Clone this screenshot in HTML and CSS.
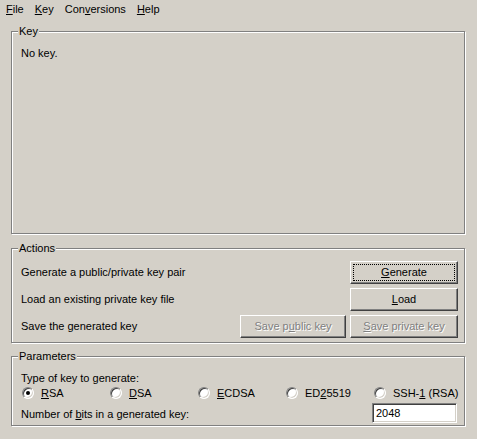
FILE: index.html
```
<!DOCTYPE html>
<html>
<head>
<meta charset="utf-8">
<title>PuTTY Key Generator</title>
<link rel="stylesheet" href="styles.css">
</head>
<body>
<div class="menubar">
  <span class="menu-item"><u>F</u>ile</span>
  <span class="menu-item"><u>K</u>ey</span>
  <span class="menu-item">Con<u>v</u>ersions</span>
  <span class="menu-item"><u>H</u>elp</span>
</div>

<fieldset class="group group-key">
  <legend>Key</legend>
  <div class="key-body">No key.</div>
</fieldset>

<fieldset class="group group-actions">
  <legend>Actions</legend>
  <div class="action-row">
    <span class="action-label">Generate a public/private key pair</span>
    <button class="btn btn-wide focused"><u>G</u>enerate</button>
  </div>
  <div class="action-row">
    <span class="action-label">Load an existing private key file</span>
    <button class="btn btn-wide"><u>L</u>oad</button>
  </div>
  <div class="action-row">
    <span class="action-label">Save the generated key</span>
    <div class="btn-pair">
      <button class="btn btn-narrow disabled">Save p<u>u</u>blic key</button>
      <button class="btn btn-wide disabled"><u>S</u>ave private key</button>
    </div>
  </div>
</fieldset>

<fieldset class="group group-params">
  <legend>Parameters</legend>
  <div class="param-label">Type of key to generate:</div>
  <div class="radio-row">
    <label class="radio-opt"><span class="radio checked"></span><span><u>R</u>SA</span></label>
    <label class="radio-opt"><span class="radio"></span><span><u>D</u>SA</span></label>
    <label class="radio-opt"><span class="radio"></span><span><u>E</u>CDSA</span></label>
    <label class="radio-opt"><span class="radio"></span><span>ED<u>2</u>5519</span></label>
    <label class="radio-opt"><span class="radio"></span><span>SSH-<u>1</u> (RSA)</span></label>
  </div>
  <div class="bits-row">
    <span class="param-label bits-label">Number of <u>b</u>its in a generated key:</span>
    <div class="edit">2048</div>
  </div>
</fieldset>
</body>
</html>
```
FILE: styles.css
```
html, body {
  margin: 0;
  padding: 0;
  background: #d4d0c8;
}
body {
  font-family: "Liberation Sans", Arial, sans-serif;
  font-size: 11px;
  line-height: 13px;
  color: #000;
  width: 477px;
  height: 439px;
  overflow: hidden;
}
u { text-decoration: underline; text-underline-offset: 1px; }

.menubar {
  display: flex;
  height: 19px;
  align-items: center;
  margin-bottom: 6px;
}
.menu-item {
  padding: 0 6px;
}
.menu-item + .menu-item { margin-left: -1px; }

.group {
  margin: 0 12px 0 11px;
  padding: 0 6px;
  border: 1px solid #808080;
  box-shadow: inset 1px 1px 0 #fff, 1px 1px 0 #fff;
  min-width: 0;
  width: 454px;
  box-sizing: border-box;
}
.group legend {
  padding: 0 1px;
  margin: 0;
  line-height: 13px;
  background: #d4d0c8;
}

.key-body {
  box-sizing: border-box;
  height: 195px;
  padding: 9px 0 0 3px;
}

.group-actions {
  margin-top: 8px;
  padding-top: 6px;
  padding-bottom: 4px;
  display: flex;
  flex-direction: column;
  gap: 4px;
}
.action-row {
  display: flex;
  align-items: center;
  justify-content: space-between;
  height: 23px;
}
.action-label {
  padding-left: 3px;
}
.btn-pair {
  display: flex;
  gap: 4px;
}
.btn {
  font: inherit;
  height: 23px;
  padding: 0;
  margin: 0;
  background: #d4d0c8;
  color: #000;
  border: 1px solid;
  border-color: #fff #404040 #404040 #fff;
  box-shadow: inset -1px -1px 0 #808080;
  box-sizing: border-box;
  white-space: nowrap;
}
.btn-wide { width: 108px; }
.btn-narrow { width: 106px; }
.btn.focused {
  outline: 1px dotted #000;
  outline-offset: -4px;
}
.btn.disabled {
  color: #808080;
  text-shadow: 1px 1px 0 #fff;
}

.group-params {
  margin-top: 7px;
  padding-top: 9px;
  padding-bottom: 2px;
}
.param-label {
  padding-left: 3px;
}
.radio-row {
  display: grid;
  grid-template-columns: 88px 88px 88px 88px 1fr;
  padding-left: 4px;
  height: 16px;
  align-items: center;
}
.radio-opt {
  display: flex;
  align-items: center;
  gap: 7px;
  white-space: nowrap;
}
.radio {
  width: 12px;
  height: 12px;
  box-sizing: border-box;
  border-radius: 50%;
  background: #fff;
  border: 1px solid;
  border-color: #808080 #fff #fff #808080;
  box-shadow: inset 1px 1px 0 #404040, inset -1px -1px 0 #d4d0c8;
  display: flex;
  align-items: center;
  justify-content: center;
  flex: none;
}
.radio.checked::after {
  content: "";
  width: 4px;
  height: 4px;
  border-radius: 50%;
  background: #000;
}
.bits-row {
  display: flex;
  align-items: center;
  justify-content: space-between;
  margin-top: 2px;
}
.bits-label {
  padding-top: 3px;
}
.edit {
  width: 85px;
  height: 20px;
  box-sizing: border-box;
  margin-right: 1px;
  background: #fff;
  border: 1px solid;
  border-color: #808080 #fff #fff #808080;
  box-shadow: inset 1px 1px 0 #404040, inset -1px -1px 0 #d4d0c8;
  padding: 3px 0 0 3px;
  line-height: 13px;
}
```
